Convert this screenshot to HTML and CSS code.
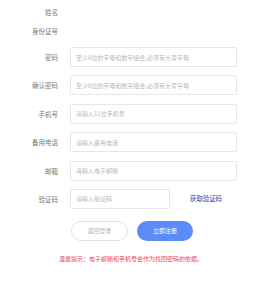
FILE: index.html
```html
<!DOCTYPE html>
<html lang="zh-CN">
<head>
    <meta charset="UTF-8">
    <title>注册</title>
    <link rel="stylesheet" href="styles.css">
</head>
<body>
    <form class="register">
        <div class="row plain">
            <label>姓名</label>
        </div>
        <div class="row plain">
            <label>身份证号</label>
        </div>
        <div class="row">
            <label>密码</label>
            <input type="password" placeholder="至少6位的字母和数字组合,必须有大写字母">
        </div>
        <div class="row">
            <label>确认密码</label>
            <input type="password" placeholder="至少6位的字母和数字组合,必须有大写字母">
        </div>
        <div class="row">
            <label>手机号</label>
            <input type="text" placeholder="请输入11位手机号">
        </div>
        <div class="row">
            <label>备用电话</label>
            <input type="text" placeholder="请输入备用电话">
        </div>
        <div class="row">
            <label>邮箱</label>
            <input type="text" placeholder="请输入电子邮箱">
        </div>
        <div class="row code">
            <label>验证码</label>
            <input type="text" placeholder="请输入验证码">
            <a href="#" class="get-code">获取验证码</a>
        </div>
        <div class="actions">
            <button type="button" class="back">返回登录</button>
            <button type="button" class="submit">立即注册</button>
        </div>
        <p class="tip">温馨提示：电子邮箱和手机号会作为找回密码的依据。</p>
    </form>
</body>
</html>
```

FILE: styles.css
```css
body {
    margin: 0;
    background: #fff;
    font-family: "Noto Sans CJK SC", "Noto Sans", sans-serif;
    color: #777;
}

.register {
    padding-top: 2px;
}

.row {
    display: grid;
    grid-template-columns: 58px 167px;
    column-gap: 12px;
    align-items: center;
    height: 20px;
    margin-bottom: 8.4px;
}

.row.plain {
    height: 19px;
    margin-bottom: 0;
}

.row.plain + .row:not(.plain) {
    margin-top: 7px;
}

.row label {
    text-align: right;
    font-size: 6.5px;
    color: #7a7a7a;
}

.row input {
    box-sizing: border-box;
    height: 20px;
    width: 100%;
    margin: 0;
    padding: 0 5px;
    border: 1px solid #e6e6e6;
    border-radius: 2px;
    font-family: inherit;
    font-size: 6px;
    color: #333;
    outline: none;
}

.row input::placeholder {
    color: #b8b8b8;
}

.row.code {
    grid-template-columns: 58px 100px auto;
}

.get-code {
    margin-left: 8px;
    font-size: 6.4px;
    color: #3a3aa8;
    text-decoration: none;
}

.actions {
    display: flex;
    gap: 9px;
    margin: 11.6px 0 0 71px;
}

.actions button {
    height: 20px;
    border-radius: 10px;
    font-family: inherit;
    font-size: 6px;
    padding: 0;
    cursor: pointer;
}

.back {
    width: 57px;
    background: #fff;
    border: 1px solid #e2e2e2;
    color: #b8b8b8;
}

.submit {
    width: 56px;
    background: #5b8cf8;
    border: none;
    color: #fff;
}

.tip {
    margin: 13px 0 0 59px;
    font-size: 6px;
    color: #f04848;
}
```
